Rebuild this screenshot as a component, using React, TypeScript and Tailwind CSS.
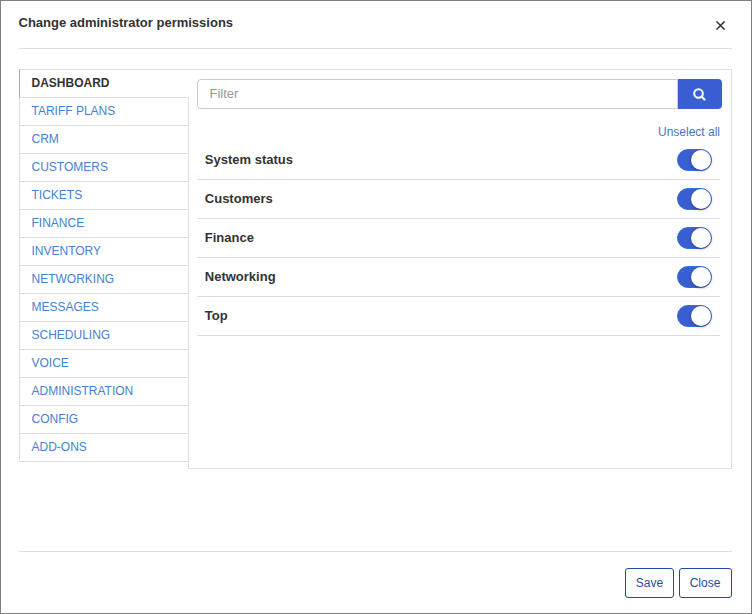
import { useState } from "react";

const sections = [
  "DASHBOARD",
  "TARIFF PLANS",
  "CRM",
  "CUSTOMERS",
  "TICKETS",
  "FINANCE",
  "INVENTORY",
  "NETWORKING",
  "MESSAGES",
  "SCHEDULING",
  "VOICE",
  "ADMINISTRATION",
  "CONFIG",
  "ADD-ONS",
];

const permissions = ["System status", "Customers", "Finance", "Networking", "Top"];

function Toggle({ label }: { label: string }) {
  const [on, setOn] = useState(true);
  return (
    <button
      type="button"
      role="switch"
      aria-checked={on}
      aria-label={label}
      onClick={() => setOn(!on)}
      className={`flex h-[22px] w-[35px] rounded-full border border-[#3570d0] ${on ? "justify-end bg-[#395fd3]" : "justify-start bg-white"}`}
    >
      <span className="size-5 rounded-full bg-white shadow-[0_1px_3px_rgba(0,0,0,0.4)]" />
    </button>
  );
}

export default function App() {
  const [active, setActive] = useState("DASHBOARD");
  return (
    <div className="flex h-[614px] w-[752px] flex-col border border-[#808080] bg-white pr-[19px] pl-[18px] font-['Liberation_Sans',Arial,sans-serif] text-xs text-[#333]">
      <header className="flex h-12 shrink-0 justify-between border-b border-[#dedede] pr-[7px]">
        <h1 className="-ml-[0.500px] pt-3.5 text-[13px] leading-4 font-bold">Change administrator permissions</h1>
        <button type="button" aria-label="Close dialog" className="flex h-12 items-center">
          <svg width="9" height="9" viewBox="0 0 9 9" stroke="#333" strokeWidth="1.500" fill="none">
            <path d="M.4 .4 8.600 8.600M8.600 .4 .4 8.600" />
          </svg>
        </button>
      </header>

      <main className="mt-5 flex h-[400px] shrink-0">
        <nav className="w-[169px] shrink-0">
          {sections.map((s) => (
            <button
              key={s}
              type="button"
              onClick={() => setActive(s)}
              className={`flex items-center border-b border-l pb-0.5 pl-[11.500px] text-left ${
                s === "DASHBOARD" ? "h-[29px] border-t" : "h-7"
              } ${
                active === s
                  ? "relative z-10 w-[170px] border-t-[#dedede] border-b-[#dedede] border-l-[#aaa] bg-white font-bold text-[#333]"
                  : "w-full border-[#dedede] text-[#4681d2]"
              }`}
            >
              {s}
            </button>
          ))}
        </nav>

        <section className="w-[544px] shrink-0 border border-[#e0e0e0] pt-[9px] pr-[9px] pl-2">
          <div className="flex h-[30px]">
            <input
              placeholder="Filter"
              className="h-[30px] w-[481px] rounded-l border border-[#ccc] pr-3 pb-0.5 pl-[11.500px] text-[13px] outline-none placeholder:text-[#999]"
            />
            <button
              type="button"
              aria-label="Search"
              className="flex w-11 items-center justify-center rounded-r bg-[#395fd3] text-white"
            >
              <svg width="13" height="13" viewBox="0 0 13 13" fill="none" stroke="currentColor" className="-ml-px mt-px">
                <circle cx="5.500" cy="5.500" r="4.300" strokeWidth="2" />
                <path d="M8.800 8.800 11.500 11.500" strokeWidth="2.200" strokeLinecap="round" />
              </svg>
            </button>
          </div>

          <div className="mr-0.5">
            <div className="flex h-8 items-end justify-end">
              <a href="#" className="leading-[18px] text-[#4577bb]">Unselect all</a>
            </div>
            {permissions.map((p) => (
              <div key={p} className="flex h-[39px] items-center justify-between border-b border-[#dedede] pr-2 pl-2">
                <span className="-ml-[0.200px] text-[13px] font-bold">{p}</span>
                <Toggle label={p} />
              </div>
            ))}
          </div>
        </section>
      </main>

      <footer className="mt-[82px] flex justify-end gap-[5px] border-t border-[#dedede] pt-4">
        <button type="button" className="h-[30px] w-[49px] rounded-[3px] border border-[#1f4ba3] text-[#1f4ba3]">
          Save
        </button>
        <button type="button" className="h-[30px] w-[53px] rounded-[3px] border border-[#1f4ba3] pr-px text-[#1f4ba3]">
          Close
        </button>
      </footer>
    </div>
  );
}
